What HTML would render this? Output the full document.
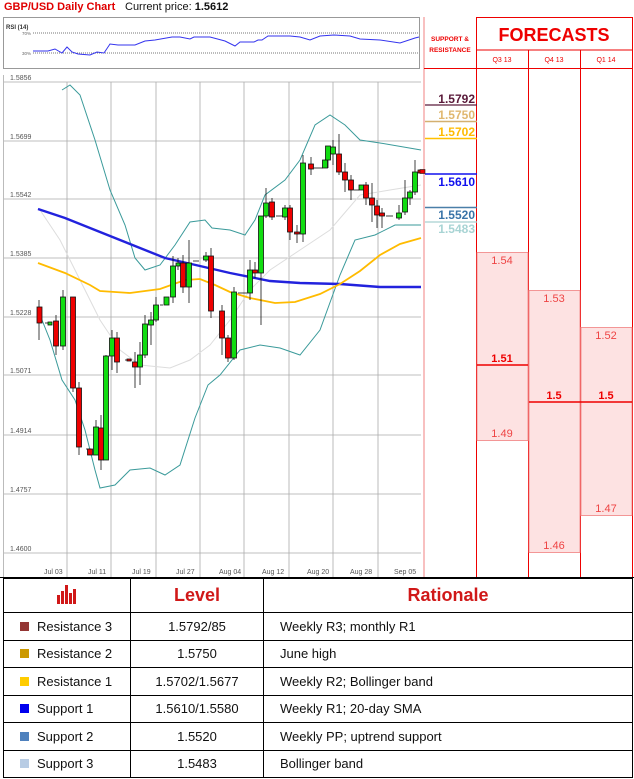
<!DOCTYPE html>
<html><head><meta charset="utf-8"><style>
*{margin:0;padding:0;box-sizing:border-box}
body{width:634px;height:779px;background:#fff;position:relative;overflow:hidden;font-family:"Liberation Sans",sans-serif}
.a{position:absolute}
table{border-collapse:collapse;position:absolute;left:3px;top:578px;width:630px}
td{border:1px solid #000;font-size:13px;color:#111;height:27.5px}
</style></head><body>
<div class="a" style="left:4px;top:1px;font-size:11px;font-weight:bold;color:#e00000">GBP/USD Daily Chart</div>
<div class="a" style="left:125px;top:1px;font-size:11px;color:#111">Current price: <b>1.5612</b></div>

<svg class="a" style="left:0;top:0" width="634" height="579">
<rect x="3.5" y="17.5" width="416" height="51" fill="#fff" stroke="#999"/>
<text x="6" y="29" font-size="6" font-weight="bold" fill="#333">RSI (14)</text>
<text x="22" y="35" font-size="4.5" fill="#666">70%</text>
<text x="22" y="55" font-size="4.5" fill="#666">30%</text>
<line x1="33" y1="33" x2="419" y2="33" stroke="#777" stroke-dasharray="1,1"/>
<line x1="33" y1="53" x2="419" y2="53" stroke="#777" stroke-dasharray="1,1"/>
<polyline fill="none" stroke="#3333ee" stroke-width="1" points="33,51 48,51 55,49 62,53 67,47 72,52 78,54 90,55 97,52 104,53 110,44 118,45 135,45 145,41 155,40 172,37 180,37 190,39 194,37 210,37 225,41 235,46 240,42 254,42 258,40 262,40 268,36 290,36 300,37 310,40 320,36 334,35 350,36 360,39 380,40 400,43 415,38 419,37"/>
<g stroke="#aaa" stroke-width="0.8">
<line x1="3" y1="82" x2="421" y2="82"/><line x1="3" y1="141" x2="421" y2="141"/><line x1="3" y1="199" x2="421" y2="199"/><line x1="3" y1="258" x2="421" y2="258"/><line x1="3" y1="317" x2="421" y2="317"/><line x1="3" y1="375" x2="421" y2="375"/><line x1="3" y1="435" x2="421" y2="435"/><line x1="3" y1="494" x2="421" y2="494"/><line x1="3" y1="553" x2="421" y2="553"/>
<line x1="67" y1="82" x2="67" y2="577"/><line x1="111" y1="82" x2="111" y2="577"/><line x1="156" y1="82" x2="156" y2="577"/><line x1="200" y1="82" x2="200" y2="577"/><line x1="244" y1="82" x2="244" y2="577"/><line x1="289" y1="82" x2="289" y2="577"/><line x1="333" y1="82" x2="333" y2="577"/><line x1="378" y1="82" x2="378" y2="577"/>
</g>
<line x1="3.5" y1="75" x2="3.5" y2="577" stroke="#bbb"/>
<g font-size="7" fill="#555">
<text x="10" y="80">1.5856</text><text x="10" y="139">1.5699</text><text x="10" y="197">1.5542</text><text x="10" y="256">1.5385</text><text x="10" y="315">1.5228</text><text x="10" y="373">1.5071</text><text x="10" y="433">1.4914</text><text x="10" y="492">1.4757</text><text x="10" y="551">1.4600</text>
<text x="44" y="574">Jul 03</text><text x="88" y="574">Jul 11</text><text x="132" y="574">Jul 19</text><text x="176" y="574">Jul 27</text><text x="219" y="574">Aug 04</text><text x="262" y="574">Aug 12</text><text x="307" y="574">Aug 20</text><text x="350" y="574">Aug 28</text><text x="394" y="574">Sep 05</text>
</g>
<polyline fill="none" stroke="#ddd" points="40,210 60,240 80,280 100,320 120,350 140,365 170,368 190,360 210,345 230,320 250,290 270,270 300,250 330,230 360,195 390,190 421,185"/>
<polyline fill="none" stroke="#3a9a9a" stroke-width="1" points="62,90 70,85 80,95 95,140 110,190 125,225 135,258 145,270 160,265 175,245 190,222 205,220 212,228 230,230 245,235 255,220 265,195 285,180 300,160 315,125 330,115 345,125 360,140 380,143 421,150"/>
<polyline fill="none" stroke="#3a9a9a" stroke-width="1" points="38,310 50,340 62,380 75,400 85,430 95,470 100,488 115,485 130,470 150,468 165,475 180,465 195,418 208,385 220,375 240,350 260,345 280,348 300,355 320,330 340,275 355,240 375,235 395,225 421,225"/>
<polyline fill="none" stroke="#2222dd" stroke-width="2.4" points="38,209 65,218 100,232 135,246 165,258 200,266 230,273 270,281 300,283 340,284 380,287 421,287"/>
<polyline fill="none" stroke="#ffbb00" stroke-width="1.8" points="38,263 65,273 90,285 100,291 130,293 160,289 185,280 200,279 215,285 230,292 250,298 275,303 295,302 320,294 340,284 360,271 380,255 400,244 421,238"/>
<g stroke="#111" stroke-width="0.8">
<line x1="39" y1="300" x2="39" y2="340"/><rect x="37" y="307" width="5" height="16" fill="#e00"/>
<line x1="45" y1="323" x2="48" y2="323"/>
<rect x="48" y="322" width="4" height="3" fill="#1d1"/>
<line x1="56" y1="315" x2="56" y2="355"/><rect x="53.5" y="321" width="5" height="25" fill="#e00"/>
<line x1="63" y1="290" x2="63" y2="350"/><rect x="60.5" y="297" width="5" height="49" fill="#1d1"/>
<line x1="73" y1="297" x2="73" y2="392"/><rect x="70.5" y="297" width="5" height="91" fill="#e00"/>
<line x1="79" y1="382" x2="79" y2="455"/><rect x="76.5" y="388" width="5" height="59" fill="#e00"/>
<line x1="86" y1="449" x2="91" y2="449"/><rect x="87.5" y="449" width="5" height="6" fill="#e00"/>
<line x1="96" y1="420" x2="96" y2="455"/><rect x="93.5" y="427" width="5" height="28" fill="#1d1"/>
<line x1="101" y1="415" x2="101" y2="470"/><rect x="98.5" y="428" width="5" height="32" fill="#e00"/>
<line x1="106" y1="355" x2="106" y2="460"/><rect x="103.5" y="356" width="5" height="104" fill="#1d1"/>
<line x1="112" y1="330" x2="112" y2="370"/><rect x="109.5" y="338" width="5" height="18" fill="#1d1"/>
<line x1="117" y1="332" x2="117" y2="373"/><rect x="114.5" y="338" width="5" height="24" fill="#e00"/>
<line x1="125" y1="360" x2="132" y2="360"/><rect x="127" y="359" width="4" height="2" fill="#e00"/>
<line x1="135" y1="352" x2="135" y2="388"/><rect x="132.5" y="362" width="5" height="5" fill="#e00"/>
<line x1="140" y1="342" x2="140" y2="385"/><rect x="137.5" y="355" width="5" height="12" fill="#1d1"/>
<line x1="145" y1="315" x2="145" y2="358"/><rect x="142.5" y="324" width="5" height="31" fill="#1d1"/>
<line x1="151" y1="312" x2="151" y2="345"/><rect x="148.5" y="320" width="5" height="5" fill="#1d1"/>
<line x1="156" y1="297" x2="156" y2="322"/><rect x="153.5" y="305" width="5" height="15" fill="#1d1"/>
<line x1="160" y1="305" x2="163" y2="305"/>
<rect x="164" y="297" width="5" height="8" fill="#1d1"/>
<line x1="173" y1="256" x2="173" y2="303"/><rect x="170.5" y="266" width="5" height="31" fill="#1d1"/>
<line x1="178" y1="258" x2="178" y2="270"/><rect x="176" y="263" width="4" height="3" fill="#1d1"/>
<line x1="183" y1="255" x2="183" y2="293"/><rect x="180.5" y="263" width="5" height="24" fill="#e00"/>
<line x1="189" y1="240" x2="189" y2="303"/><rect x="186.5" y="263" width="5" height="24" fill="#1d1"/>
<line x1="193" y1="261" x2="199" y2="261"/>
<line x1="206" y1="252" x2="206" y2="262"/><rect x="203.5" y="256" width="5" height="4" fill="#1d1"/>
<line x1="211" y1="248" x2="211" y2="318"/><rect x="208.5" y="256" width="5" height="55" fill="#e00"/>
<line x1="222" y1="305" x2="222" y2="355"/><rect x="219.5" y="311" width="5" height="27" fill="#e00"/>
<line x1="228" y1="335" x2="228" y2="362"/><rect x="225.5" y="338" width="5" height="20" fill="#e00"/>
<line x1="234" y1="287" x2="234" y2="360"/><rect x="231.5" y="292" width="5" height="66" fill="#1d1"/>
<line x1="238" y1="293" x2="247" y2="293"/>
<line x1="250" y1="260" x2="250" y2="300"/><rect x="247.5" y="270" width="5" height="23" fill="#1d1"/>
<line x1="255" y1="262" x2="255" y2="278"/><rect x="252.5" y="270" width="5" height="3" fill="#e00"/>
<line x1="261" y1="255" x2="261" y2="325"/><rect x="258.5" y="216" width="5" height="57" fill="#1d1"/>
<line x1="266" y1="188" x2="266" y2="218"/><rect x="263.5" y="203" width="5" height="13" fill="#1d1"/>
<line x1="272" y1="198" x2="272" y2="220"/><rect x="269.5" y="202" width="5" height="15" fill="#e00"/>
<line x1="276" y1="216" x2="283" y2="216"/>
<line x1="285" y1="205" x2="285" y2="220"/><rect x="282.5" y="208" width="5" height="9" fill="#1d1"/>
<line x1="290" y1="205" x2="290" y2="240"/><rect x="287.5" y="208" width="5" height="24" fill="#e00"/>
<line x1="297" y1="225" x2="297" y2="243"/><rect x="294.5" y="232" width="5" height="2" fill="#e00"/>
<line x1="303" y1="155" x2="303" y2="242"/><rect x="300.5" y="163" width="5" height="71" fill="#1d1"/>
<line x1="311" y1="157" x2="311" y2="175"/><rect x="308.5" y="164" width="5" height="5" fill="#e00"/>
<line x1="314" y1="168" x2="323" y2="168"/>
<rect x="322.5" y="160" width="5" height="8" fill="#1d1"/>
<line x1="328" y1="150" x2="328" y2="168"/><rect x="325.5" y="146" width="5" height="14" fill="#1d1"/>
<line x1="333" y1="140" x2="333" y2="165"/><rect x="330.5" y="147" width="5" height="7" fill="#1d1"/>
<line x1="339" y1="134" x2="339" y2="175"/><rect x="336.5" y="154" width="5" height="18" fill="#e00"/>
<line x1="345" y1="163" x2="345" y2="192"/><rect x="342.5" y="172" width="5" height="8" fill="#e00"/>
<line x1="351" y1="175" x2="351" y2="200"/><rect x="348.5" y="180" width="5" height="10" fill="#e00"/>
<line x1="354" y1="190" x2="359" y2="190"/>
<rect x="359" y="185" width="5" height="5" fill="#1d1"/>
<line x1="366" y1="182" x2="366" y2="205"/><rect x="363.5" y="185" width="5" height="13" fill="#e00"/>
<line x1="372" y1="183" x2="372" y2="222"/><rect x="369.5" y="198" width="5" height="7" fill="#e00"/>
<line x1="377" y1="200" x2="377" y2="228"/><rect x="374.5" y="206" width="5" height="9" fill="#e00"/>
<line x1="382" y1="208" x2="382" y2="228"/><rect x="379.5" y="213" width="5" height="3" fill="#e00"/>
<line x1="386" y1="216" x2="393" y2="216"/>
<line x1="399" y1="205" x2="399" y2="220"/><rect x="396.5" y="213" width="5" height="5" fill="#1d1"/>
<line x1="405" y1="180" x2="405" y2="215"/><rect x="402.5" y="198" width="5" height="14" fill="#1d1"/>
<line x1="410" y1="190" x2="410" y2="205"/><rect x="407.5" y="192" width="5" height="6" fill="#1d1"/>
<line x1="415" y1="160" x2="415" y2="195"/><rect x="412.5" y="172" width="5" height="20" fill="#1d1"/>
<rect x="418" y="170" width="4" height="3" fill="#e00"/>
</g>
<line x1="424" y1="17" x2="424" y2="577" stroke="#f08080"/>
<line x1="476.5" y1="17" x2="476.5" y2="577" stroke="#e00"/>
<line x1="528.5" y1="50" x2="528.5" y2="577" stroke="#e00"/>
<line x1="580.5" y1="50" x2="580.5" y2="577" stroke="#e00"/>
<line x1="632.5" y1="17" x2="632.5" y2="577" stroke="#e00"/>
<line x1="476" y1="17.5" x2="633" y2="17.5" stroke="#e00"/>
<line x1="476" y1="50" x2="633" y2="50" stroke="#e00"/>
<line x1="424" y1="68.5" x2="633" y2="68.5" stroke="#e00"/>
<text x="450" y="41" font-size="6.5" font-weight="bold" fill="#e00" text-anchor="middle">SUPPORT &amp;</text>
<text x="450" y="52" font-size="6.5" font-weight="bold" fill="#e00" text-anchor="middle">RESISTANCE</text>
<text x="554" y="41" font-size="18" font-weight="bold" fill="#e00" text-anchor="middle">FORECASTS</text>
<g font-size="7" fill="#e00" text-anchor="middle"><text x="502" y="62">Q3 13</text><text x="554" y="62">Q4 13</text><text x="606" y="62">Q1 14</text></g>
<g font-size="12" font-weight="bold" text-anchor="end">
<text x="475" y="103" fill="#5a1a3a">1.5792</text><line x1="425" y1="105" x2="477" y2="105" stroke="#5a1a3a" stroke-width="1.2"/>
<text x="475" y="119" fill="#e0b870">1.5750</text><line x1="425" y1="121.5" x2="477" y2="121.5" stroke="#d4b070" stroke-width="1.5"/>
<text x="475" y="136" fill="#ffbb00">1.5702</text><line x1="425" y1="138.5" x2="477" y2="138.5" stroke="#ffc000" stroke-width="1.5"/>
<line x1="425" y1="174" x2="477" y2="174" stroke="#1111ee" stroke-width="1.5"/><text x="475" y="186" fill="#1111ee">1.5610</text>
<line x1="425" y1="207.5" x2="477" y2="207.5" stroke="#4a7fa8" stroke-width="1.5"/><text x="475" y="219" fill="#3a74a8">1.5520</text>
<line x1="425" y1="222" x2="477" y2="222" stroke="#a8d0d0" stroke-width="1.2"/><text x="475" y="233" fill="#a8d4d4">1.5483</text>
</g>
<rect x="420" y="169.5" width="5" height="4" fill="#e00" stroke="#111" stroke-width="0.6"/>
<g fill="#fde2e2" stroke="#f08080" stroke-width="0.8">
<rect x="477" y="252.5" width="51" height="188"/>
<rect x="529" y="290.5" width="51" height="262"/>
<rect x="581" y="327.5" width="51" height="188"/>
</g>
<g stroke="#e00" stroke-width="1.5"><line x1="477" y1="365" x2="528" y2="365"/><line x1="529" y1="402" x2="632" y2="402"/></g>
<g font-size="11" fill="#e44" text-anchor="middle">
<text x="502" y="264">1.54</text><text x="502" y="437">1.49</text>
<text x="554" y="302">1.53</text><text x="554" y="549">1.46</text>
<text x="606" y="339">1.52</text><text x="606" y="512">1.47</text>
</g>
<g font-size="11" font-weight="bold" fill="#e00" text-anchor="middle">
<text x="502" y="362">1.51</text><text x="554" y="399">1.5</text><text x="606" y="399">1.5</text>
</g>
<line x1="0" y1="577.5" x2="634" y2="577.5" stroke="#000"/>
</svg>

<table>
<tr style="height:34px"><td style="width:127px;text-align:center"><svg width="22" height="20" viewBox="0 0 22 20"><g fill="#d01818"><rect x="1" y="11" width="3" height="9"/><rect x="5" y="7" width="3" height="13"/><rect x="9" y="1" width="3" height="19"/><rect x="13" y="9" width="3" height="11"/><rect x="17" y="5" width="3" height="15"/></g></svg></td>
<td style="width:133px;text-align:center;font-size:18px;font-weight:bold;color:#d01818">Level</td>
<td style="text-align:center;font-size:18px;font-weight:bold;color:#d01818">Rationale</td></tr>
<tr><td style="padding-left:16px"><span style="display:inline-block;width:9px;height:9px;background:#943634;margin-right:8px"></span>Resistance 3</td><td style="text-align:center">1.5792/85</td><td style="padding-left:16px">Weekly R3; monthly R1</td></tr>
<tr><td style="padding-left:16px"><span style="display:inline-block;width:9px;height:9px;background:#cc9900;margin-right:8px"></span>Resistance 2</td><td style="text-align:center">1.5750</td><td style="padding-left:16px">June high</td></tr>
<tr><td style="padding-left:16px"><span style="display:inline-block;width:9px;height:9px;background:#ffcc00;margin-right:8px"></span>Resistance 1</td><td style="text-align:center">1.5702/1.5677</td><td style="padding-left:16px">Weekly R2; Bollinger band</td></tr>
<tr><td style="padding-left:16px"><span style="display:inline-block;width:9px;height:9px;background:#0000ee;margin-right:8px"></span>Support 1</td><td style="text-align:center">1.5610/1.5580</td><td style="padding-left:16px">Weekly R1; 20-day SMA</td></tr>
<tr><td style="padding-left:16px"><span style="display:inline-block;width:9px;height:9px;background:#4f81bd;margin-right:8px"></span>Support 2</td><td style="text-align:center">1.5520</td><td style="padding-left:16px">Weekly PP; uptrend support</td></tr>
<tr><td style="padding-left:16px"><span style="display:inline-block;width:9px;height:9px;background:#b8cce4;margin-right:8px"></span>Support 3</td><td style="text-align:center">1.5483</td><td style="padding-left:16px">Bollinger band</td></tr>
</table>
</body></html>
